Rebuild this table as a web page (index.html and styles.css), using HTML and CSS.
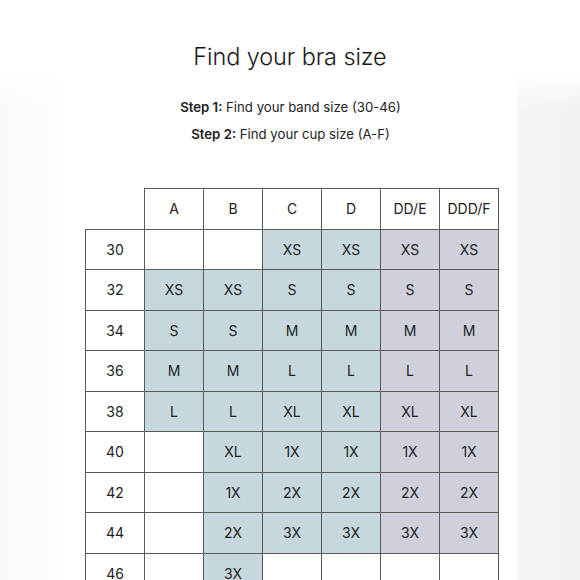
FILE: index.html
```
<!DOCTYPE html>
<html>
<head>
<meta charset="utf-8">
<link rel="stylesheet" href="styles.css">
</head>
<body>
<div class="page">
  <h1 class="title">Find your bra size</h1>
  <div class="card">
    <p class="step"><b>Step 1:</b> Find your band size (30-46)</p>
    <p class="step"><b>Step 2:</b> Find your cup size (A-F)</p>
    <table class="chart">
      <tr class="head">
        <th class="corner"></th><th>A</th><th>B</th><th>C</th><th>D</th><th>DD/E</th><th>DDD/F</th>
      </tr>
      <tr><td class="band">30</td><td></td><td></td><td class="t">XS</td><td class="t">XS</td><td class="l">XS</td><td class="l">XS</td></tr>
      <tr><td class="band">32</td><td class="t">XS</td><td class="t">XS</td><td class="t">S</td><td class="t">S</td><td class="l">S</td><td class="l">S</td></tr>
      <tr><td class="band">34</td><td class="t">S</td><td class="t">S</td><td class="t">M</td><td class="t">M</td><td class="l">M</td><td class="l">M</td></tr>
      <tr><td class="band">36</td><td class="t">M</td><td class="t">M</td><td class="t">L</td><td class="t">L</td><td class="l">L</td><td class="l">L</td></tr>
      <tr><td class="band">38</td><td class="t">L</td><td class="t">L</td><td class="t">XL</td><td class="t">XL</td><td class="l">XL</td><td class="l">XL</td></tr>
      <tr><td class="band">40</td><td></td><td class="t">XL</td><td class="t">1X</td><td class="t">1X</td><td class="l">1X</td><td class="l">1X</td></tr>
      <tr><td class="band">42</td><td></td><td class="t">1X</td><td class="t">2X</td><td class="t">2X</td><td class="l">2X</td><td class="l">2X</td></tr>
      <tr><td class="band">44</td><td></td><td class="t">2X</td><td class="t">3X</td><td class="t">3X</td><td class="l">3X</td><td class="l">3X</td></tr>
      <tr><td class="band">46</td><td></td><td class="t">3X</td><td></td><td></td><td></td><td></td></tr>
    </table>
  </div>
</div>
</body>
</html>
```
FILE: styles.css
```
html, body {
  margin: 0;
  padding: 0;
}
body {
  width: 580px;
  height: 580px;
  overflow: hidden;
  background: linear-gradient(90deg, #f9f9fa 0%, #fdfdfd 10%, #ffffff 11%, #ffffff 88%, #f5f5f7 89%, #f1f1f4 100%);
  font-family: "Inter", "Liberation Sans", sans-serif;
  color: #1e1e1e;
}
.page {
  height: 580px;
  background: linear-gradient(180deg, #ffffff 0, #ffffff 70px, rgba(255,255,255,0) 110px);
}
.title {
  margin: 0;
  padding-top: 41px;
  font-weight: 300;
  font-size: 23.5px;
  line-height: 32px;
  text-align: center;
  letter-spacing: -0.1px;
  color: #1a1a1a;
}
.card {
  margin: 0 0 0 62px;
  width: 455px;
  background: #fff;
  padding-top: 21px;
  height: 600px;
}
.step {
  margin: 0;
  font-size: 13.2px;
  line-height: 27px;
  text-align: center;
  color: #222;
  padding-left: 2px;
}
.step b {
  font-weight: 600;
}
.chart {
  border-collapse: collapse;
  margin: 40px 0 0 23px;
  table-layout: fixed;
}
.chart th, .chart td {
  width: 58px;
  height: 39.5px;
  padding: 0;
  border: 1px solid #5a5a5a;
  text-align: center;
  font-size: 14px;
  font-weight: 400;
  color: #222;
  background: #fff;
}
.chart .corner {
  border-top: none;
  border-left: none;
  background: transparent;
}
.chart .t {
  background: #c6d8dd;
}
.chart .l {
  background: #cfd0dc;
}
```
